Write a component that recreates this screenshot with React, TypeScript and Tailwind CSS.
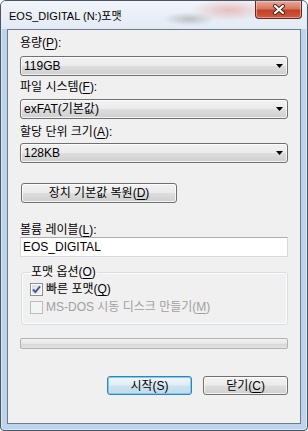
import React from "react";

const Key: React.FC<{ children: React.ReactNode }> = ({ children }) => (
  <span className="underline decoration-1 underline-offset-2">{children}</span>
);

const FieldLabel: React.FC<{ children: React.ReactNode; className?: string }> = ({ children, className }) => (
  <div className={`h-[14px] leading-[14px] ${className ?? ""}`}>{children}</div>
);

// win7 style combobox (closed)
const Combo: React.FC<{ value: string; className?: string }> = ({ value, className }) => (
  <div
    className={`flex h-[20px] items-center justify-between rounded-[3px] border border-[#707070] bg-[linear-gradient(to_bottom,#f2f2f2_0%,#ebebeb_48%,#dddddd_52%,#cfcfcf_100%)] pl-[3px] pr-[4px] shadow-[inset_0_0_0_1px_rgba(255,255,255,0.75)] ${className ?? ""}`}
  >
    <span className="leading-[14px]">{value}</span>
    <svg width="7" height="4" viewBox="0 0 7 4">
      <path d="M0 0h7L3.5 4z" fill="#000" />
    </svg>
  </div>
);

export default function App() {
  return (
    <div className="h-[431px] w-[308px] font-['Liberation_Sans','Noto_Sans_CJK_KR',sans-serif] text-[12px] text-black">
      <div className="flex h-full flex-col rounded-t-[6px] rounded-b-[4px] border border-[#4a5566] bg-[#bed4ec] shadow-[inset_0_0_0_1px_rgba(255,255,255,0.45)]">
        {/* title bar */}
        <div className="flex h-[28px] items-start justify-between rounded-t-[5px] bg-[radial-gradient(ellipse_26px_7px_at_188px_18px,rgba(110,110,115,0.35),transparent),radial-gradient(ellipse_38px_11px_at_228px_9px,rgba(215,95,85,0.35),transparent),linear-gradient(to_bottom,#f1f5fa,#e2eaf4)]">
          <span className="pl-[8px] pt-[9px] text-[11px] leading-[12px]">EOS_DIGITAL (N:)포맷</span>
          <button className="mr-[5px] flex h-[18px] w-[47px] items-center justify-center rounded-b-[4px] border border-t-0 border-[#5b2a22] bg-[linear-gradient(to_bottom,#e9a99b_0%,#d9775f_45%,#c1412a_55%,#d45a3c_100%)] shadow-[inset_0_0_0_1px_rgba(255,220,210,0.5)]">
            <svg width="14" height="11" viewBox="0 0 14 11">
              <path d="M3 2l8 7M11 2l-8 7" stroke="#3b2320" strokeWidth="4" strokeLinecap="round" />
              <path d="M3 2l8 7M11 2l-8 7" stroke="#fff" strokeWidth="2.2" strokeLinecap="round" />
            </svg>
          </button>
        </div>

        {/* client area */}
        <div className="mx-[6px] flex h-[395px] flex-col border border-[#6f7b8a] bg-[#f0f0f0] px-[12px]">
          <FieldLabel className="mt-[6px]">
            용량(<Key>P</Key>):
          </FieldLabel>
          <Combo value="119GB" className="mt-[6px]" />

          <FieldLabel className="mt-[4px]">
            파일 시스템(<Key>F</Key>):
          </FieldLabel>
          <Combo value="exFAT(기본값)" className="mt-[5px]" />

          <FieldLabel className="mt-[6px]">
            할당 단위 크기(<Key>A</Key>):
          </FieldLabel>
          <Combo value="128KB" className="mt-[4px]" />

          <button className="ml-[1px] mt-[20px] h-[20px] w-[156px] rounded-[3px] border border-[#707070] bg-[linear-gradient(to_bottom,#f2f2f2_0%,#ebebeb_48%,#dddddd_52%,#cfcfcf_100%)] leading-[14px] shadow-[inset_0_0_0_1px_rgba(255,255,255,0.75)]">
            장치 기본값 복원(<Key>D</Key>)
          </button>

          <FieldLabel className="mt-[20px]">
            볼륨 레이블(<Key>L</Key>):
          </FieldLabel>
          <input
            readOnly
            defaultValue="EOS_DIGITAL"
            className="h-[20px] w-full border border-[#d5dae1] border-t-[#abadb3] bg-white pl-[2px] text-[12px] leading-[14px] outline-none"
          />

          <fieldset className="ml-[1px] mt-[8px] rounded-[3px] border border-[#d5dfe5] px-[8px] pb-[10px] shadow-[inset_0_0_0_1px_rgba(255,255,255,0.8)]">
            <legend className="h-[14px] px-[1px] leading-[14px]">
              포맷 옵션(<Key>O</Key>)
            </legend>
            <div className="mt-[3px] flex h-[14px] items-center gap-[3px]">
              <span className="flex h-[13px] w-[13px] items-center justify-center border border-[#8f8f8f] bg-[linear-gradient(to_bottom_right,#d6d9de,#f7f7f7)] shadow-[inset_0_0_0_1px_#ffffff]">
                <svg width="11" height="11" viewBox="0 0 11 11">
                  <path d="M2 5.5L4.4 8L9 2.4" fill="none" stroke="#3d5a9e" strokeWidth="1.9" />
                </svg>
              </span>
              <span className="leading-[14px]">
                빠른 포맷(<Key>Q</Key>)
              </span>
            </div>
            <div className="mt-[4px] flex h-[14px] items-center gap-[3px] text-[#a0a0a0]">
              <span className="h-[13px] w-[13px] border border-[#bcbcbc] bg-[#f4f4f4]" />
              <span className="leading-[14px]">
                MS-DOS 시동 디스크 만들기(<Key>M</Key>)
              </span>
            </div>
          </fieldset>

          <div className="mt-[13px] h-[11px] w-full rounded-[2px] border border-[#b2b2b2] bg-[linear-gradient(to_bottom,#f3f3f3_0%,#e6e6e6_50%,#d6d6d6_55%,#e4e4e4_100%)]" />

          <div className="mt-[27px] flex justify-end gap-[11px]">
            <button className="h-[19px] w-[85px] rounded-[3px] border border-[#3c7fb1] bg-[linear-gradient(to_bottom,#eef6fb_0%,#e0edf6_48%,#cfe1ee_52%,#c3d9ea_100%)] leading-[14px] shadow-[inset_0_0_0_1px_#6fd0fa]">
              시작(S)
            </button>
            <button className="h-[19px] w-[85px] rounded-[3px] border border-[#707070] bg-[linear-gradient(to_bottom,#f2f2f2_0%,#ebebeb_48%,#dddddd_52%,#cfcfcf_100%)] leading-[14px] shadow-[inset_0_0_0_1px_rgba(255,255,255,0.75)]">
              닫기(<Key>C</Key>)
            </button>
          </div>
        </div>
      </div>
    </div>
  );
}
